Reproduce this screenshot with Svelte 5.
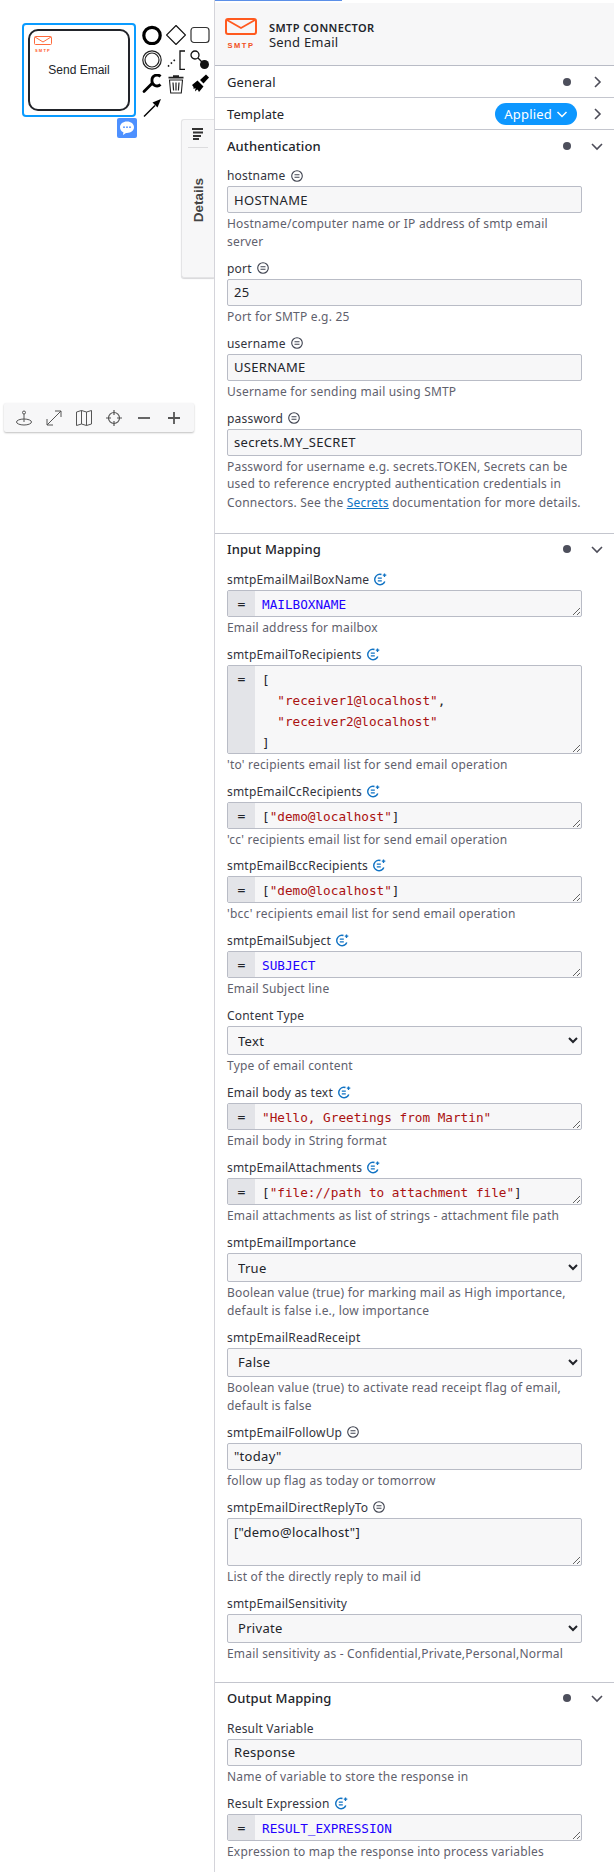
<script>
  const groups = [
    { title: 'Authentication', fields: [
      { label: 'hostname', mark: 'static', value: 'HOSTNAME', desc: 'Hostname/computer name or IP address of smtp email server' },
      { label: 'port', mark: 'static', value: '25', desc: 'Port for SMTP e.g. 25' },
      { label: 'username', mark: 'static', value: 'USERNAME', desc: 'Username for sending mail using SMTP' },
      { label: 'password', mark: 'static', value: 'secrets.MY_SECRET', secrets: true }
    ]},
    { title: 'Input Mapping', fields: [
      { label: 'smtpEmailMailBoxName', mark: 'feel', code: [[['v', 'MAILBOXNAME']]], desc: 'Email address for mailbox' },
      { label: 'smtpEmailToRecipients', mark: 'feel', code: [
        [['b', '[']],
        [['p', '  '], ['s', '"receiver1@localhost"'], ['p', ',']],
        [['p', '  '], ['s', '"receiver2@localhost"']],
        [['b', ']']]
      ], desc: "'to' recipients email list for send email operation" },
      { label: 'smtpEmailCcRecipients', mark: 'feel', code: [[['b', '['], ['s', '"demo@localhost"'], ['b', ']']]], desc: "'cc' recipients email list for send email operation" },
      { label: 'smtpEmailBccRecipients', mark: 'feel', code: [[['b', '['], ['s', '"demo@localhost"'], ['b', ']']]], desc: "'bcc' recipients email list for send email operation" },
      { label: 'smtpEmailSubject', mark: 'feel', code: [[['v', 'SUBJECT']]], desc: 'Email Subject line' },
      { label: 'Content Type', select: 'Text', desc: 'Type of email content' },
      { label: 'Email body as text', mark: 'feel', code: [[['s', '"Hello, Greetings from Martin"']]], desc: 'Email body in String format' },
      { label: 'smtpEmailAttachments', mark: 'feel', code: [[['b', '['], ['s', '"file://path to attachment file"'], ['b', ']']]], desc: 'Email attachments as list of strings - attachment file path' },
      { label: 'smtpEmailImportance', select: 'True', desc: 'Boolean value (true) for marking mail as High importance, default is false i.e., low importance' },
      { label: 'smtpEmailReadReceipt', select: 'False', desc: 'Boolean value (true) to activate read receipt flag of email, default is false' },
      { label: 'smtpEmailFollowUp', mark: 'static', value: '"today"', desc: 'follow up flag as today or tomorrow' },
      { label: 'smtpEmailDirectReplyTo', mark: 'static', area: '["demo@localhost"]', desc: 'List of the directly reply to mail id' },
      { label: 'smtpEmailSensitivity', select: 'Private', desc: 'Email sensitivity as - Confidential,Private,Personal,Normal' }
    ]},
    { title: 'Output Mapping', fields: [
      { label: 'Result Variable', value: 'Response', desc: 'Name of variable to store the response in' },
      { label: 'Result Expression', mark: 'feel', code: [[['v', 'RESULT_EXPRESSION']]], desc: 'Expression to map the response into process variables' }
    ]}
  ];
</script>

<div class="page">
  <div class="canvas">
    <div class="node">
      <div class="task">
        <svg class="task-logo" width="18" height="10" viewBox="0 0 18 10">
          <rect x="0.5" y="0.5" width="17" height="8" rx="1" fill="none" stroke="#ff6a3c" />
          <path d="M1 1l8 5 8-5" fill="none" stroke="#ff6a3c" />
        </svg>
        <span class="task-smtp">SMTP</span>
        <span class="task-name">Send Email</span>
      </div>
    </div>

    <div class="pad">
      <svg width="20" height="20" viewBox="0 0 20 20"><circle cx="10" cy="10.500" r="8.200" fill="none" stroke="#000" stroke-width="3.200" /></svg>
      <svg width="20" height="20" viewBox="0 0 20 20"><path d="M10 .5l9.500 9.500-9.500 9.500L.5 10z" fill="none" stroke="#111" stroke-width="1.200" /></svg>
      <svg width="20" height="20" viewBox="0 0 20 20"><rect x="1" y="2.500" width="18" height="15" rx="3" fill="none" stroke="#333" stroke-width="1.200" /></svg>
      <svg width="20" height="20" viewBox="0 0 20 20"><circle cx="10" cy="10" r="9.200" fill="none" stroke="#222" stroke-width="1.200" /><circle cx="10" cy="10" r="7" fill="none" stroke="#222" stroke-width="1.200" /></svg>
      <svg width="20" height="20" viewBox="0 0 20 20"><path d="M2 16.500l8.500-8.500" fill="none" stroke="#111" stroke-width="1.600" stroke-dasharray="1.600 2.400" /><path d="M19 1h-5v18.500h5" fill="none" stroke="#111" stroke-width="1.300" /></svg>
      <svg width="20" height="20" viewBox="0 0 20 20"><circle cx="5" cy="5" r="4" fill="none" stroke="#111" stroke-width="1.300" /><path d="M8 8l4 4" stroke="#111" stroke-width="1.300" /><circle cx="14.500" cy="14.500" r="4.500" fill="#111" /></svg>
      <svg width="20" height="20" viewBox="0 0 20 20"><path d="M2 17.500l8-8" stroke="#000" stroke-width="2.800" stroke-linecap="round" /><path d="M18.500 2.500A5 5 0 0 0 10 6.500a5 5 0 0 0 8.500 4" fill="none" stroke="#000" stroke-width="2.800" /></svg>
      <svg width="20" height="20" viewBox="0 0 20 20"><path d="M3.500 6h13l-1.200 13H4.700z" fill="none" stroke="#222" stroke-width="1.100" /><path d="M2.500 3.600h15M7 2h6" stroke="#222" stroke-width="1.600" /><path d="M7 8.500l.6 8M10 8.500v8M13 8.500l-.6 8" stroke="#222" stroke-width="1.200" /></svg>
      <svg width="20" height="20" viewBox="0 0 20 20"><path d="M2 11l5.500-4.500 6 6-4.500 5.500c-.8-.8-.6-2-1.800-2.400L5 17.500l.6-3.400-2 .8c.2-1.500-.4-2.700-1.600-3.900z" fill="#000" /><path d="M10 6l6-5.500 3 3L13.500 9.500z" fill="#000" /></svg>
      <svg width="20" height="20" viewBox="0 0 20 20"><path d="M2 17.500L13 6.500" stroke="#000" stroke-width="1.500" /><path d="M19 0l-8.500 3.500 5 5z" fill="#000" /></svg>
    </div>

    <div class="comment">
      <svg width="18" height="18" viewBox="0 0 18 18">
        <path d="M9 2.500c4 0 7 2.400 7 5.700s-3 5.700-7 5.700l-1 0-3 2.100.4-2.800C3.200 12.300 2 10.400 2 8.200 2 4.900 5 2.500 9 2.500z" fill="#fff" />
        <circle cx="6" cy="8.200" r="0.900" fill="#4d90ff" /><circle cx="9" cy="8.200" r="0.900" fill="#4d90ff" /><circle cx="12" cy="8.200" r="0.900" fill="#4d90ff" />
      </svg>
    </div>

    <div class="tab">
      <svg width="12" height="12" viewBox="0 0 12 12"><path d="M0 1h11M1 4.500h10M1 8h8M1 11h6" stroke="#333" stroke-width="1.800" /></svg>
      <span class="tab-sep"></span>
      <span class="tab-text">Details</span>
    </div>

    <div class="tools">
      <svg width="18" height="18" viewBox="0 0 18 18"><ellipse cx="9" cy="13" rx="7.500" ry="3" fill="none" stroke="#555" /><circle cx="9" cy="3.500" r="1.500" fill="none" stroke="#555" /><path d="M9 5v8" stroke="#555" /></svg>
      <svg width="18" height="18" viewBox="0 0 18 18"><path d="M2 16L16 2M10 2h6v6M2 10v6h6" fill="none" stroke="#555" /></svg>
      <svg width="18" height="18" viewBox="0 0 18 18"><path d="M1.500 3l5-1.500 5 1.500 5-1.500v13.500l-5 1.500-5-1.500-5 1.500zM6.500 1.500V15M11.500 3v13.500" fill="none" stroke="#555" /></svg>
      <svg width="18" height="18" viewBox="0 0 18 18"><circle cx="9" cy="9" r="5.500" fill="none" stroke="#555" stroke-width="1.200" /><path d="M9 1v5M9 12v5M1 9h5M12 9h5" stroke="#555" stroke-width="1.200" /></svg>
      <svg width="18" height="18" viewBox="0 0 18 18"><path d="M3 9h12" stroke="#555" stroke-width="1.800" /></svg>
      <svg width="18" height="18" viewBox="0 0 18 18"><path d="M3 9h12M9 3v12" stroke="#555" stroke-width="1.800" /></svg>
    </div>
  </div>

  <aside class="panel">
    <div class="topline"></div>
    <header class="head">
      <div class="logo">
        <svg width="32" height="17" viewBox="0 0 32 17">
          <rect x="1" y="1" width="30" height="15" rx="2" fill="none" stroke="#ff5a1f" stroke-width="2" />
          <path d="M2 2l14 8 14-8" fill="none" stroke="#ff5a1f" stroke-width="1.800" />
        </svg>
        <span>SMTP</span>
      </div>
      <div class="head-text">
        <div class="head-type">SMTP CONNECTOR</div>
        <div class="head-name">Send Email</div>
      </div>
    </header>

    <div class="group-head">
      <span class="group-title">General</span>
      <span class="dot"></span>
      <svg class="chev" width="16" height="16" viewBox="0 0 16 16"><path d="M6 3l5 5-5 5" fill="none" stroke="#4d4d59" stroke-width="1.600" /></svg>
    </div>
    <div class="group-head">
      <span class="group-title">Template</span>
      <span class="pill">Applied
        <svg width="12" height="12" viewBox="0 0 12 12"><path d="M1.500 4l4.500 4.500L10.500 4" fill="none" stroke="#fff" stroke-width="1.500" /></svg>
      </span>
      <svg class="chev" width="16" height="16" viewBox="0 0 16 16"><path d="M6 3l5 5-5 5" fill="none" stroke="#4d4d59" stroke-width="1.600" /></svg>
    </div>

    {#each groups as group}
      <section class="group">
        <div class="group-head open">
          <span class="group-title">{group.title}</span>
          <span class="dot"></span>
          <svg class="chev" width="16" height="16" viewBox="0 0 16 16"><path d="M3 6l5 5 5-5" fill="none" stroke="#4d4d59" stroke-width="1.600" /></svg>
        </div>
        <div class="entries">
          {#each group.fields as field}
            <div class="entry">
              <div class="label">
                {field.label}
                {#if field.mark === 'static'}
                  <svg width="12" height="12" viewBox="0 0 12 12"><circle cx="6" cy="6" r="5.300" fill="none" stroke="#3f4350" stroke-width="1.100" /><path d="M3.500 4.700h5M3.500 7.300h5" stroke="#3f4350" stroke-width="1.100" /></svg>
                {:else if field.mark === 'feel'}
                  <svg width="13" height="13" viewBox="0 0 13 13"><path d="M10.800 8.500A5.200 5.200 0 1 1 7.500 1.500" fill="none" stroke="#1173c4" stroke-width="1.500" /><path d="M3.800 5.200h4M3.800 7.800h4" stroke="#1173c4" stroke-width="1.300" /><path d="M10.500.5v3.500M8.800 2.200h3.500" stroke="#1173c4" stroke-width="1.300" /></svg>
                {/if}
              </div>
              {#if field.code}
                <div class="feel">
                  <span class="gutter">=</span>
                  <div class="editor">
                    {#each field.code as line}
                      <div class="code-line">{#each line as part}<span class={part[0]}>{part[1]}</span>{/each}</div>
                    {/each}
                  </div>
                </div>
              {:else if field.select}
                <select class="select">
                  <option>{field.select}</option>
                </select>
              {:else if field.area}
                <textarea class="area" readonly value={field.area}></textarea>
              {:else}
                <input class="input" readonly value={field.value} />
              {/if}
              {#if field.secrets}
                <div class="desc">Password for username e.g. secrets.TOKEN, Secrets can be used to reference encrypted authentication credentials in Connectors. See the <a href="#secrets">Secrets</a> documentation for more details.</div>
              {:else if field.desc}
                <div class="desc">{field.desc}</div>
              {/if}
            </div>
          {/each}
        </div>
      </section>
    {/each}
  </aside>
</div>

<style>
  :global(body) {
    overflow: hidden;
    background: #fff;
  }

  .page {
    display: flex;
    width: 614px;
    height: 1872px;
    overflow: hidden;
    font-family: "Noto Sans", Roboto, sans-serif;
    color: #22242a;
  }

  .canvas {
    position: relative;
    width: 214px;
    flex: none;
  }

  .node {
    position: absolute;
    left: 22px;
    top: 23px;
    width: 114px;
    height: 94px;
    box-sizing: border-box;
    border: 2px solid #0a9bff;
    border-radius: 4px;
    padding: 4px;
  }

  .task {
    position: relative;
    height: 100%;
    box-sizing: border-box;
    border: 2px solid #22242a;
    border-radius: 10px;
    display: flex;
    align-items: center;
    justify-content: center;
  }

  .task-logo {
    position: absolute;
    left: 4px;
    top: 5px;
  }

  .task-smtp {
    position: absolute;
    left: 5px;
    top: 17px;
    font: bold 4px "Liberation Sans", sans-serif;
    letter-spacing: 1.200px;
    color: #ff5a1f;
  }

  .task-name {
    font: 12px "Liberation Sans", Arial, sans-serif;
  }

  .pad {
    position: absolute;
    left: 142px;
    top: 25px;
    display: grid;
    grid-template-columns: repeat(3, 20px);
    gap: 4.500px 4px;
  }

  .comment {
    position: absolute;
    left: 117px;
    top: 118px;
    width: 20px;
    height: 20px;
    background: #4d90ff;
    border-radius: 2px;
    display: flex;
    align-items: center;
    justify-content: center;
  }

  .tab {
    position: absolute;
    left: 181px;
    top: 119px;
    width: 33px;
    height: 159px;
    box-sizing: border-box;
    background: #f7f7f8;
    border: 1px solid #e4e4e6;
    border-right: none;
    border-radius: 3px 0 0 3px;
    box-shadow: 0 1px 1px #d8d8da;
    display: flex;
    flex-direction: column;
    align-items: center;
    padding-top: 8px;
  }

  .tab-sep {
    width: 20px;
    height: 1px;
    background: #dcdcde;
    margin: 7px 0 30px;
  }

  .tab-text {
    writing-mode: vertical-rl;
    transform: rotate(180deg);
    font: bold 13.500px "Liberation Sans", Arial, sans-serif;
    color: #444;
  }

  .tools {
    position: absolute;
    left: 4px;
    top: 403px;
    width: 190px;
    height: 29px;
    box-sizing: border-box;
    background: #f7f7f8;
    border-radius: 2px;
    box-shadow: 0 1px 2px rgba(0, 0, 0, 0.25);
    display: flex;
    align-items: center;
    justify-content: space-between;
    padding: 0 11px;
  }

  .panel {
    width: 400px;
    box-sizing: border-box;
    border-left: 1px solid #d4d4da;
    font-size: 12px;
    letter-spacing: 0.200px;
    position: relative;
    padding-top: 3px;
  }

  .topline {
    position: absolute;
    top: 0;
    left: 0;
    width: 127px;
    height: 1px;
    background: #5b8fe8;
  }

  .head {
    display: flex;
    align-items: center;
    gap: 12px;
    height: 63px;
    box-sizing: border-box;
    padding-left: 10px;
    background: #f7f7f8;
    border-bottom: 1px solid #b9bcc6;
  }

  .head-text {
    padding-top: 3px;
  }

  .logo {
    width: 32px;
    display: flex;
    flex-direction: column;
    align-items: center;
  }

  .logo span {
    font: bold 7.500px "Liberation Sans", sans-serif;
    letter-spacing: 1.600px;
    color: #f25022;
    margin-top: 6px;
  }

  .head-type {
    font-size: 11px;
    font-weight: 600;
    line-height: 14px;
    letter-spacing: 0.400px;
  }

  .head-name {
    font-size: 13px;
    line-height: 15px;
    letter-spacing: 0.200px;
  }

  .group-head {
    display: flex;
    align-items: center;
    height: 32px;
    box-sizing: border-box;
    padding: 0 9px 0 12px;
    border-bottom: 1px solid #c4c6ce;
  }

  .group-head.open {
    border-bottom: none;
    height: 31px;
  }

  .group-title {
    flex: 1;
    font-size: 13px;
    letter-spacing: 0.100px;
  }

  .open .group-title {
    font-weight: 500;
  }

  .dot {
    width: 8px;
    height: 8px;
    border-radius: 50%;
    background: #4d4f5c;
    margin-right: 18px;
  }

  .pill {
    display: flex;
    align-items: center;
    gap: 4px;
    height: 22px;
    padding: 0 9px;
    margin-right: 12px;
    border-radius: 11px;
    background: #0d97ff;
    color: #fff;
    font-size: 13px;
  }

  .entries {
    padding: 7px 32px 9px 12px;
    border-bottom: 1px solid #c4c6ce;
  }

  .group:last-of-type .entries {
    border-bottom: none;
  }

  .entry {
    margin-bottom: 10.400px;
  }

  .label {
    display: flex;
    align-items: center;
    gap: 5px;
    height: 15px;
    margin-bottom: 3px;
    line-height: 15px;
    color: #33343d;
  }

  .input,
  .area,
  .select,
  .feel {
    display: block;
    width: 100%;
    box-sizing: border-box;
    border: 1px solid #b9bcc6;
    border-radius: 2px;
    background: #f7f7f8;
    font-family: "Noto Sans", Roboto, sans-serif;
    font-size: 13px;
    letter-spacing: 0.300px;
    color: #22242a;
    margin: 0;
  }

  .input {
    height: 27px;
    padding: 0 6px;
    outline: none;
  }

  .area {
    height: 48px;
    padding: 4px 6px;
    resize: vertical;
    outline: none;
  }

  .select {
    height: 29px;
    padding: 0 6px;
  }

  .feel {
    display: flex;
    overflow: hidden;
    resize: vertical;
  }

  .gutter {
    width: 27px;
    flex: none;
    background: #e3e4e8;
    text-align: center;
    font: 13px/25px "DejaVu Sans Mono", monospace;
  }

  .editor {
    padding: 3px 7px 0;
    font: 12.700px/21px "DejaVu Sans Mono", monospace;
    letter-spacing: 0;
    color: #22242a;
    min-height: 22px;
  }

  .code-line {
    white-space: pre;
  }

  .v { color: #2200ff; }
  .s { color: #aa1111; }
  .b { color: #22242a; }
  .p { color: #22242a; }

  .desc {
    margin-top: 2px;
    line-height: 17.600px;
    font-size: 12px;
    color: #5f616d;
  }

  .desc a {
    color: #1173c4;
    line-height: 20.400px;
  }
</style>
